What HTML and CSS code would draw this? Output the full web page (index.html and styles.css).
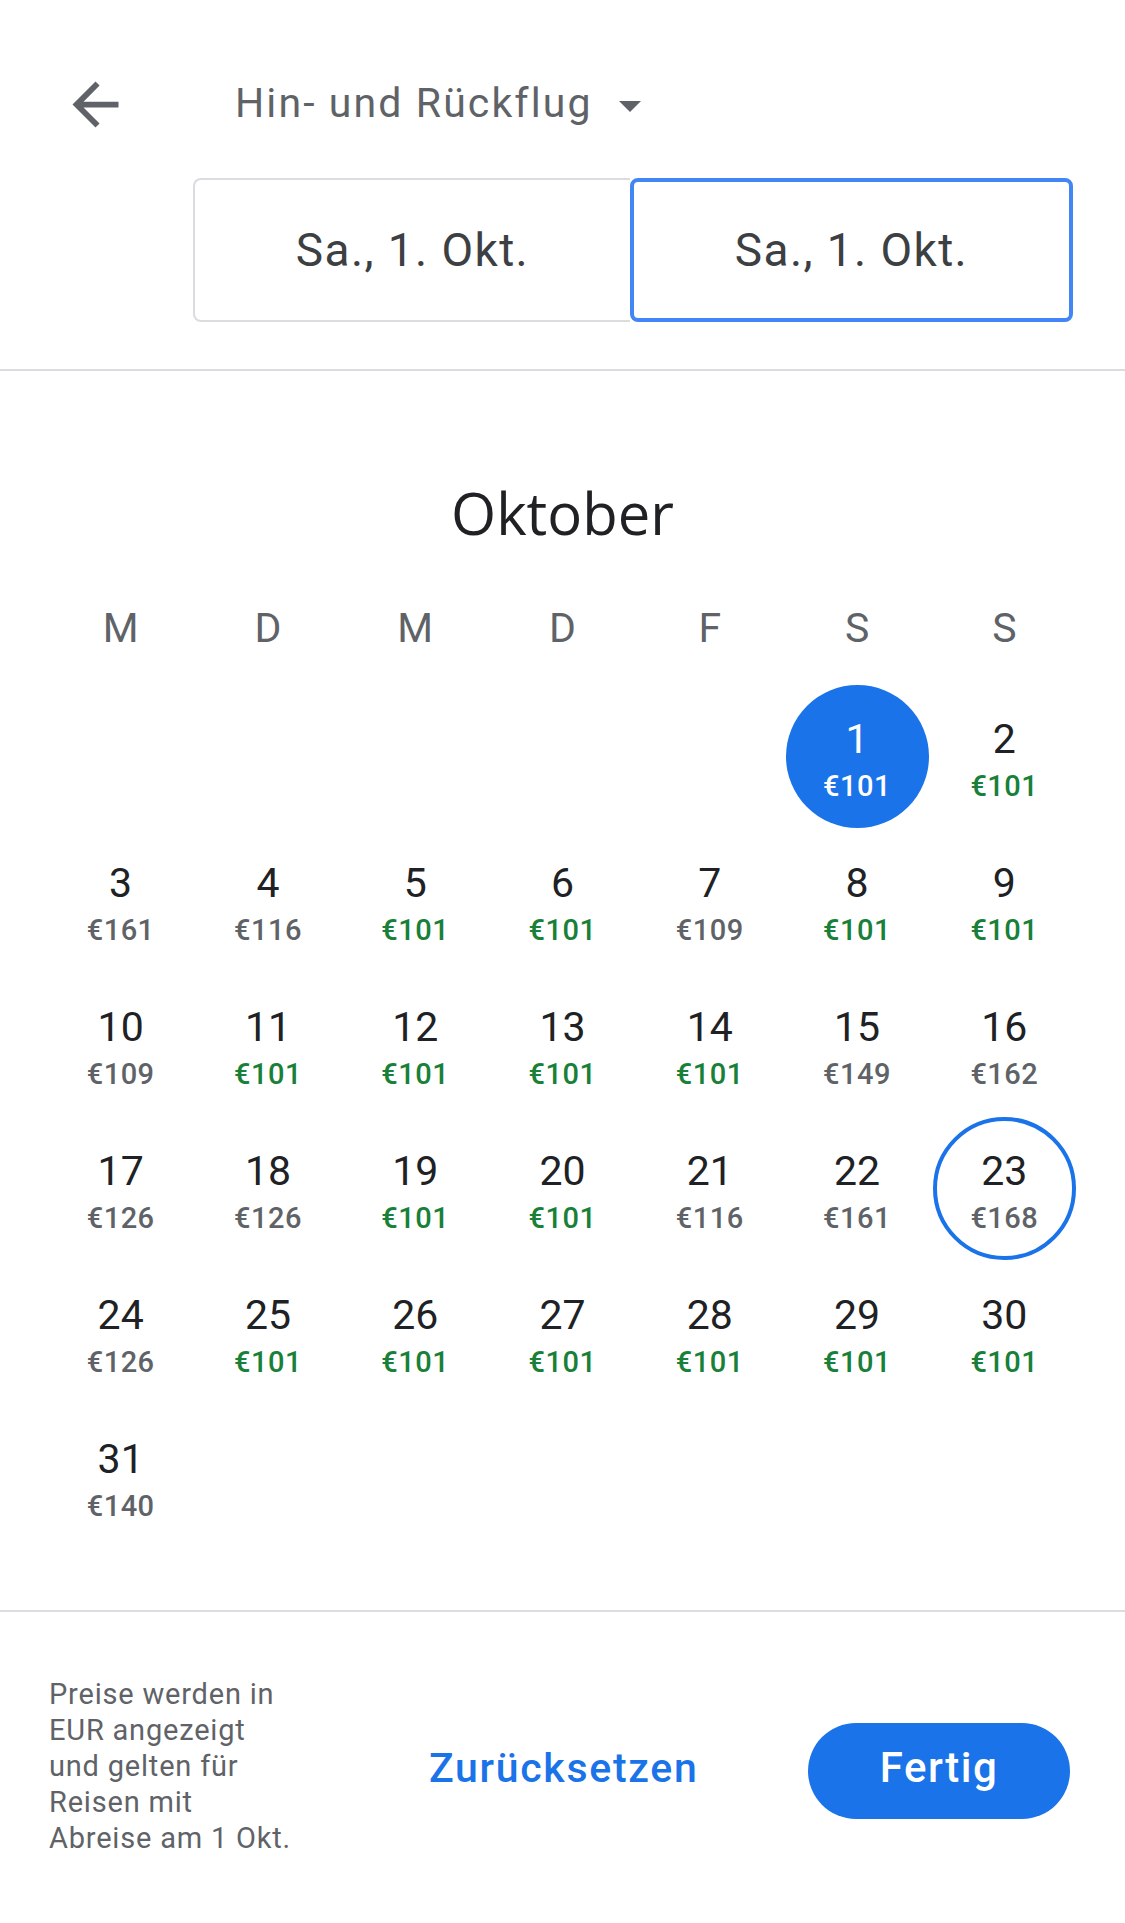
FILE: index.html
```html
<!DOCTYPE html>
<html lang="de">
<head>
<meta charset="utf-8">
<title>Kalender</title>
<link rel="stylesheet" href="styles.css">
</head>
<body>
<div class="page">
  <header class="topbar">
    <svg class="back" viewBox="0 0 24 24" aria-hidden="true"><path d="M20 11H7.83l5.59-5.59L12 4l-8 8 8 8 1.41-1.41L7.83 13H20v-2z"/></svg>
    <div class="trip">Hin- und Rückflug</div>
    <svg class="caret" viewBox="0 0 22 12" aria-hidden="true"><path d="M0 0h22L11 11z"/></svg>
  </header>
  <div class="dates">
    <div class="datebox left">Sa., 1. Okt.</div>
    <div class="datebox right">Sa., 1. Okt.</div>
  </div>
  <div class="divider top"></div>

  <h1 class="month">Oktober</h1>
  <div class="weekdays">
    <div>M</div><div>D</div><div>M</div><div>D</div><div>F</div><div>S</div><div>S</div>
  </div>
  <div class="grid">
    <div class="cell"></div><div class="cell"></div><div class="cell"></div><div class="cell"></div><div class="cell"></div>
    <div class="cell"><div class="day selected"><span class="num">1</span><span class="price">€101</span></div></div>
    <div class="cell"><div class="day"><span class="num">2</span><span class="price low">€101</span></div></div>
    <div class="cell"><div class="day"><span class="num">3</span><span class="price">€161</span></div></div>
    <div class="cell"><div class="day"><span class="num">4</span><span class="price">€116</span></div></div>
    <div class="cell"><div class="day"><span class="num">5</span><span class="price low">€101</span></div></div>
    <div class="cell"><div class="day"><span class="num">6</span><span class="price low">€101</span></div></div>
    <div class="cell"><div class="day"><span class="num">7</span><span class="price">€109</span></div></div>
    <div class="cell"><div class="day"><span class="num">8</span><span class="price low">€101</span></div></div>
    <div class="cell"><div class="day"><span class="num">9</span><span class="price low">€101</span></div></div>
    <div class="cell"><div class="day"><span class="num">10</span><span class="price">€109</span></div></div>
    <div class="cell"><div class="day"><span class="num">11</span><span class="price low">€101</span></div></div>
    <div class="cell"><div class="day"><span class="num">12</span><span class="price low">€101</span></div></div>
    <div class="cell"><div class="day"><span class="num">13</span><span class="price low">€101</span></div></div>
    <div class="cell"><div class="day"><span class="num">14</span><span class="price low">€101</span></div></div>
    <div class="cell"><div class="day"><span class="num">15</span><span class="price">€149</span></div></div>
    <div class="cell"><div class="day"><span class="num">16</span><span class="price">€162</span></div></div>
    <div class="cell"><div class="day"><span class="num">17</span><span class="price">€126</span></div></div>
    <div class="cell"><div class="day"><span class="num">18</span><span class="price">€126</span></div></div>
    <div class="cell"><div class="day"><span class="num">19</span><span class="price low">€101</span></div></div>
    <div class="cell"><div class="day"><span class="num">20</span><span class="price low">€101</span></div></div>
    <div class="cell"><div class="day"><span class="num">21</span><span class="price">€116</span></div></div>
    <div class="cell"><div class="day"><span class="num">22</span><span class="price">€161</span></div></div>
    <div class="cell"><div class="day outlined"><span class="num">23</span><span class="price">€168</span></div></div>
    <div class="cell"><div class="day"><span class="num">24</span><span class="price">€126</span></div></div>
    <div class="cell"><div class="day"><span class="num">25</span><span class="price low">€101</span></div></div>
    <div class="cell"><div class="day"><span class="num">26</span><span class="price low">€101</span></div></div>
    <div class="cell"><div class="day"><span class="num">27</span><span class="price low">€101</span></div></div>
    <div class="cell"><div class="day"><span class="num">28</span><span class="price low">€101</span></div></div>
    <div class="cell"><div class="day"><span class="num">29</span><span class="price low">€101</span></div></div>
    <div class="cell"><div class="day"><span class="num">30</span><span class="price low">€101</span></div></div>
    <div class="cell"><div class="day"><span class="num">31</span><span class="price">€140</span></div></div>
  </div>

  <div class="divider bottom"></div>
  <footer class="footer">
    <p class="note">Preise werden in<br>EUR angezeigt<br>und gelten für<br>Reisen mit<br>Abreise am 1 Okt.</p>
    <button class="reset">Zurücksetzen</button>
    <button class="done">Fertig</button>
  </footer>
</div>
</body>
</html>
```

FILE: styles.css
```css
html, body {
  margin: 0;
  padding: 0;
  background: #ffffff;
  overflow: hidden;
}

.page {
  width: 1125px;
  height: 1923px;
  font-family: Roboto, "Noto Sans", "Liberation Sans", sans-serif;
  color: #202124;
}

.topbar {
  display: flex;
  align-items: center;
  height: 69px;
  padding-top: 70px;
  padding-left: 61px;
}

.back {
  width: 69px;
  height: 69px;
  fill: #5f6368;
  flex: none;
}

.trip {
  margin-left: 105px;
  font-size: 41px;
  line-height: 48px;
  letter-spacing: 2.1px;
  color: #5f6368;
  margin-top: -4px;
}

.caret {
  width: 22px;
  height: 12px;
  fill: #5f6368;
  margin-left: 26px;
  margin-top: 4px;
}

.dates {
  display: flex;
  margin: 39px 52px 0 193px;
  height: 144px;
}

.datebox {
  flex: 1;
  display: flex;
  align-items: center;
  justify-content: center;
  font-size: 46px;
  letter-spacing: 1.4px;
  color: #3c4043;
  box-sizing: border-box;
}

.datebox.left {
  border: 2px solid #dadce0;
  border-right: none;
  border-radius: 8px 0 0 8px;
}

.datebox.right {
  border: 4px solid #4285f4;
  border-radius: 8px;
}

.divider {
  height: 2px;
  background: #dadce0;
}

.divider.top {
  margin-top: 47px;
}

.month {
  margin: 102px 0 0;
  font-family: "Open Sans", Roboto, sans-serif;
  font-size: 58px;
  line-height: 80px;
  font-weight: 400;
  text-align: center;
  color: #202124;
}

.weekdays {
  display: grid;
  grid-template-columns: repeat(7, 1fr);
  padding: 0 47px;
  margin-top: 52px;
  font-size: 41px;
  line-height: 46px;
  color: #5f6368;
  text-align: center;
}

.grid {
  display: grid;
  grid-template-columns: repeat(7, 1fr);
  grid-auto-rows: 144px;
  padding: 0 47px;
  margin-top: 33px;
}

.cell {
  display: flex;
  align-items: center;
  justify-content: center;
}

.day {
  width: 143px;
  height: 143px;
  flex: none;
  border-radius: 50%;
  box-sizing: border-box;
  padding-top: 8px;
  display: flex;
  flex-direction: column;
  align-items: center;
  justify-content: center;
}

.num {
  font-size: 41px;
  line-height: 46px;
  color: #202124;
}

.price {
  margin-top: 6px;
  font-size: 29px;
  line-height: 36px;
  font-weight: 500;
  letter-spacing: 0.5px;
  color: #5f6368;
}

.price.low {
  color: #188038;
}

.day.selected {
  background: #1a73e8;
}

.day.selected .num,
.day.selected .price {
  color: #ffffff;
}

.day.outlined {
  border: 4px solid #1a73e8;
}

.divider.bottom {
  margin-top: 62px;
}

.footer {
  display: flex;
  align-items: center;
  height: 311px;
  box-sizing: border-box;
  padding: 6px 55px 0 49px;
}

.note {
  margin: 0 0 10px;
  width: 250px;
  white-space: nowrap;
  font-size: 29px;
  line-height: 36px;
  letter-spacing: 0.8px;
  color: #5f6368;
}

.reset {
  margin-left: 130px;
  padding: 0 0 6px;
  border: none;
  background: none;
  font-family: inherit;
  font-size: 41px;
  font-weight: 500;
  letter-spacing: 1.7px;
  color: #1a73e8;
}

.done {
  margin-left: auto;
  width: 262px;
  height: 96px;
  padding: 0 0 6px;
  border: none;
  border-radius: 48px;
  background: #1a73e8;
  color: #ffffff;
  font-family: inherit;
  font-size: 42px;
  font-weight: 500;
  letter-spacing: 1.5px;
}
```
